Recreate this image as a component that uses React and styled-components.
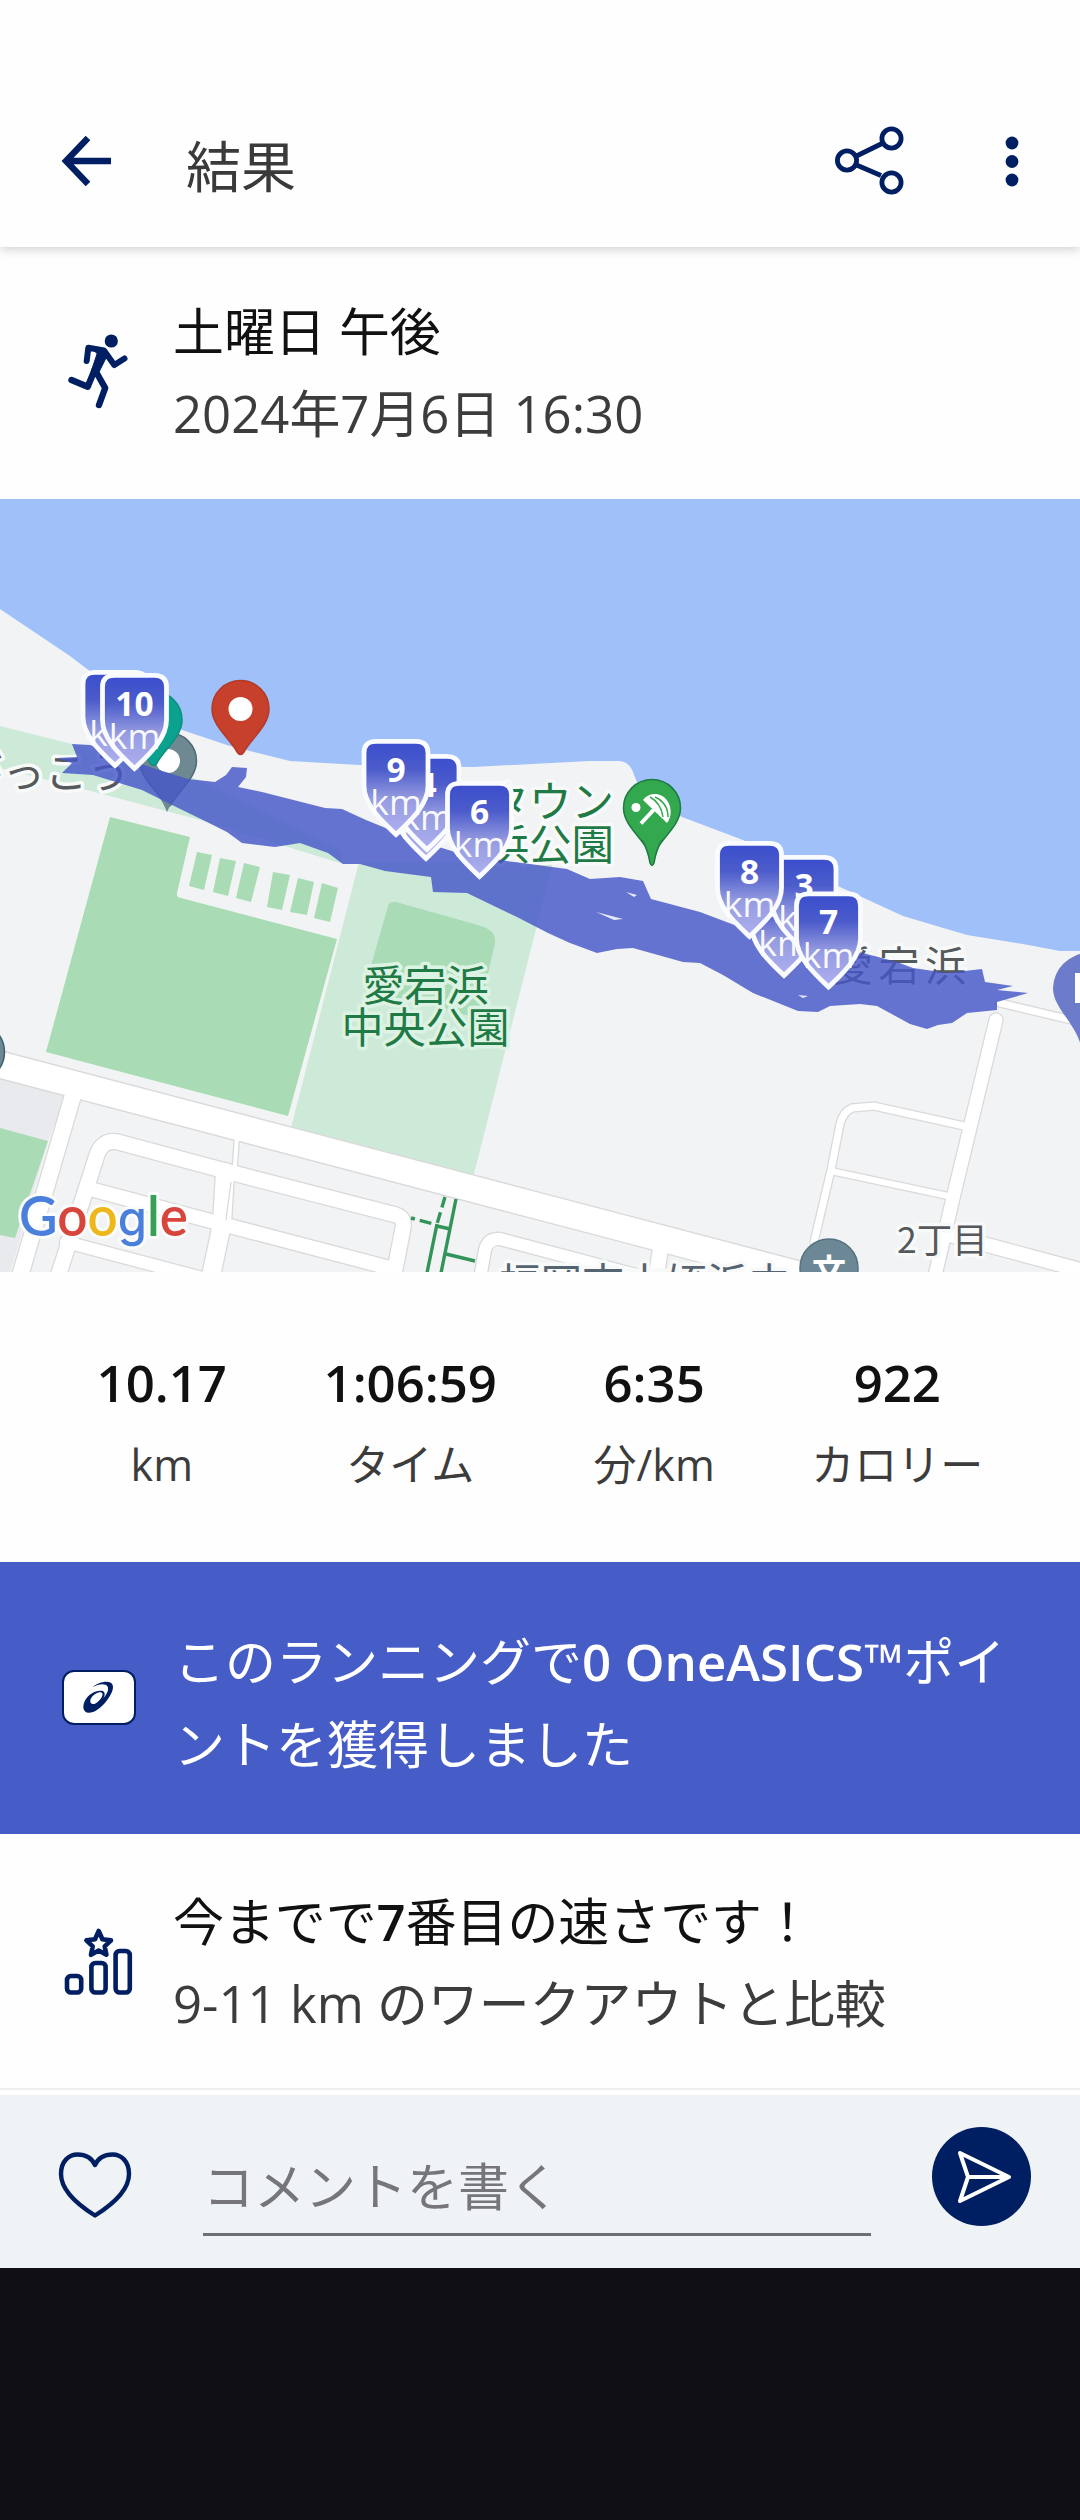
import React from 'react'
import styled, { createGlobalStyle } from 'styled-components';

const navy = '#001e62'

const stats = [
    { value: '10.17', label: 'km' },
    { value: '1:06:59', label: 'タイム' },
    { value: '6:35', label: '分/km' },
    { value: '922', label: 'カロリー' },
]

// later entries are drawn on top
const kmMarkers = [
    { km: 1, x: 115, y: 670 },
    { km: 10, x: 134.5, y: 673 },
    { km: 5, x: 426, y: 763 },
    { km: 4, x: 427, y: 754 },
    { km: 9, x: 396, y: 739 },
    { km: 6, x: 479.5, y: 781 },
    { km: 2, x: 784, y: 880 },
    { km: 3, x: 804, y: 855 },
    { km: 8, x: 749.5, y: 841 },
    { km: 7, x: 828.5, y: 891.5 },
]

const courts = [
    '197,852 212,855 204,890 189,886',
    '220,858 236,861 228,896 213,892',
    '244,863 260,867 251,902 236,898',
    '273,872 290,875 282,910 267,907',
    '298,878 314,882 307,915 290,912',
    '322,883 338,888 330,922 314,918',
]

const roads = [
    { d: 'M74 1092 L20 1276', w: 16 },
    { d: 'M55 1286 L96 1158 Q101 1139 118 1142 L237 1174 L396 1215 Q405 1218 403 1228 L391 1290', w: 15 },
    { d: 'M90 1189 L222 1224 L390 1268', w: 14 },
    { d: 'M66 1242 L210 1280', w: 12 },
    { d: 'M237 1136 L234 1178', w: 4 },
    { d: 'M225 1172 L222 1224 L208 1290', w: 18 },
    { d: 'M478 1290 L485 1250 Q488 1238 500 1239 L640 1276', w: 12 },
    { d: 'M661 1245 L655 1285', w: 15 },
    { d: 'M-10 1062 L540 1206.5 L850 1288', w: 26 },
    { d: 'M1000 1003 L1080 1022', w: 7 },
    { d: 'M964 1126 L874 1106 L852 1108 Q843 1112 840 1124 L831 1170 L814 1242', w: 7 },
    { d: 'M831 1171 L948 1196', w: 6 },
    { d: 'M950 1235 L1084 1271', w: 14 },
    { d: 'M996 1020 L953 1198 L934 1280', w: 13 },
]

function Pin({ x, y, fill, stroke, dot = true }) {
    return (
        <g transform={`translate(${x} ${y})`}>
            <path
                d="M0 -28.5 A28.5 28.5 0 0 1 28.5 0 C28.5 17 10 30 3.5 43 Q0 48 -3.5 43 C-10 30 -28.5 17 -28.5 0 A28.5 28.5 0 0 1 0 -28.5 Z"
                fill={fill}
                stroke={stroke}
                strokeWidth="1.5"
            />
            {dot && <circle r="12" fill="#fff" />}
        </g>
    )
}

function KmMarker({ km, x, y }) {
    return (
        <g transform={`translate(${x} ${y})`}>
            <path
                d="M-20 2.4 H20 Q32 2.4 32 14 V47 C32 66 14 82 0 95.5 C-14 82 -32 66 -32 47 V14 Q-32 2.4 -20 2.4 Z"
                fill="url(#shield)"
                stroke="#fafbff"
                strokeWidth="4.8"
            />
            <MarkerNumber x="0" y="42.5">{km}</MarkerNumber>
            <MarkerUnit x="0" y="76">km</MarkerUnit>
        </g>
    )
}

function RouteMap() {
    return (
        <MapSvg viewBox="0 499 1080 773">
            <defs>
                <linearGradient id="shield" x1="0" y1="0" x2="0" y2="1">
                    <stop offset="0" stopColor="#3a4dcc" />
                    <stop offset="0.3" stopColor="#4c5ccb" />
                    <stop offset="0.62" stopColor="#969ce0" />
                    <stop offset="1" stopColor="#adb0f0" />
                </linearGradient>
            </defs>
            <rect x="0" y="499" width="1080" height="774" fill="#9fc0f9" />
            <path
                d="M0 609 L70 656 L87 669 L140 704 L182 730 L230 746 L290 761 L360 765 L473 767 L590 761 L620 761 Q629 762 633 772 L640 790 L682 817 L743 840 L840 887 L903 916 L967 935 L1023 944 L1060 951 H1080 V1273 H0 Z"
                fill="#f2f3f4"
            />

            {/* parks */}
            <path d="M0 726 L72 744 L200 780 L340 850 L343 864 L200 820 L87 790 L0 768 Z" fill="#cdead9" />
            <path d="M359 862 H553 L473.5 1176 L291 1128 Z" fill="#cdead9" />
            <path d="M388 906 Q390 901 396 902 L478 925 Q497 930 495 943 L478 1018 L364 990 Z" fill="#a9dcb6" />
            <path d="M110 817 L190 837 L177 893 Q176 897 181 898 L337 939 L288 1116 L46 1052 Z" fill="#a9dcb4" />
            {courts.map((points) => <polygon key={points} points={points} fill="#a9dcb4" />)}
            <path d="M0 1070 L66 1096 L48 1141 L10 1273 H0 Z" fill="#e8eaed" />
            <path d="M0 1128 L48 1141 L15 1238 L0 1235 Z" fill="#a9dcb4" />

            {/* road casings first so that the junctions stay open */}
            <g fill="none" stroke="#dadadb" strokeLinecap="round">
                {roads.map((road) => <path key={road.d} d={road.d} strokeWidth={road.w + 2.6} />)}
            </g>
            <g fill="none" stroke="#fff" strokeLinecap="round">
                {roads.map((road) => <path key={road.d} d={road.d} strokeWidth={road.w} />)}
            </g>
            <path d="M231 1182 L226 1220" stroke="#dadadb" strokeWidth="1.3" />
            <g fill="none" stroke="#33945a" strokeWidth="3.4">
                <path d="M445 1197 L437 1224" strokeDasharray="11 5" />
                <path d="M437 1224 L427 1273 M456 1199 L441 1273 M437 1226 L450 1229 M446 1254 L475 1261" />
                <path d="M411 1218 L434 1224" strokeDasharray="4 5 12 5" />
            </g>

            <PlaceLabel x="-40" y="788" $size={42.5} $color="#55595c">がっこう</PlaceLabel>
            <PlaceLabel x="614" y="817" $size={42.5} $anchor="end">タウン</PlaceLabel>
            <PlaceLabel x="614" y="860" $size={42.5} $anchor="end">浜公園</PlaceLabel>
            <PlaceLabel x="425.5" y="1001" $size={42} $anchor="middle" $halo="#dcf3e3">愛宕浜</PlaceLabel>
            <PlaceLabel x="425.5" y="1043" $size={42} $anchor="middle" $halo="#dcf3e3">中央公園</PlaceLabel>
            <PlaceLabel x="832" y="981" $size={41} $color="#55595c" $spacing={5.5}>愛宕浜</PlaceLabel>
            <PlaceLabel x="897" y="1253" $size={35.5} $color="#55595c">2丁目</PlaceLabel>
            <PlaceLabel x="499" y="1299" $size={41.6} $color="#566370">福岡市立姪浜中</PlaceLabel>

            <circle cx="829" cy="1268" r="29" fill="#6c8795" stroke="#557280" strokeWidth="1.5" />
            <SchoolGlyph x="829" y="1284">文</SchoolGlyph>
            <circle cx="-25" cy="1052" r="29.5" fill="#6c8795" stroke="#3f5f6b" strokeWidth="1.5" />
            <Pin x={168} y={761} fill="#6f8993" stroke="#4f6a75" />
            <path d="M155 785 L167 812 L180 785 Z" fill="#6f8993" />

            {/* beach */}
            <Pin x={652} y={808} fill="#34a84f" stroke="#1b7b42" dot={false} />
            <path d="M642 840 Q648 850 650 863 Q652 868 654 863 Q656 850 662 840" fill="#34a84f" stroke="#1b7b42" strokeWidth="1.5" />
            <circle cx="636" cy="807.5" r="4.5" fill="#fff" />
            <path d="M641 823.5 L659 804" stroke="#fff" strokeWidth="4" />
            <path d="M643 800 C650 791 662 793 667.5 801 C672.5 809 671 818 667 823 Z" fill="#fff" />
            <path d="M650 797 Q661 803 663 817 M655 797 Q668 803 668 817" fill="none" stroke="#34a84f" strokeWidth="1.5" />

            {/* track */}
            <path
                d="M72 744 L90 745 L150 767 L188 779 L215 782 L226 775 L232 767 L247 768 L246 777 L238 787 L262 792 L325 808 L342 809 L366 820 L410 838 L455 852 L507 861 L530 864 L567 869 L590 879 L620 877 L643 881 L651 899 L700 912 L737 926 L800 940 L863 953 L897 962 L913 968 L947 973 L982 969 L985 982 L1013 986 L997 990 L1028 993 L997 1002 V1010 L967 1013 L952 1023 L938 1025 L927 1029 L910 1024 L877 1006 L860 1004 L830 1006 L818 1012 L798 1011 L753 993 L723 975 L700 963 L683 962 L633 948 L617 949 L597 953 L570 943 L548 933 L517 917 L467 893 L433 892 L431 877 L385 871 L360 864 H343 L328 853 L300 843 L275 847 L242 843 L227 832 L207 822 L172 805 L142 790 L93 775 L62 773 L72 763 L57 758 L77 757 Z"
                fill="#4557c8"
                fillOpacity="0.82"
            />
            <path d="M596 912 L623 919 L614 920 Z M626 892 L637 895 L634 897 Z M798 995 L808 996 L803 998 Z" fill="#e6eaf6" />
            <path d="M1088 953 A36 36 0 0 0 1053 988 C1053 1008 1075 1022 1081 1046 H1090 Z" fill="#6c7ccb" />
            <rect x="1075" y="973" width="5" height="30" fill="#fff" />

            <Pin x={153.5} y={720} fill="#0aa28f" stroke="#0b8f7f" />
            <Pin x={240.5} y={709} fill="#c6402b" stroke="#b23a28" />
            {kmMarkers.map((marker) => <KmMarker key={marker.km} {...marker} />)}

            <GoogleMark x="19" y="1236" textLength="169" lengthAdjust="spacingAndGlyphs">
                <tspan fill="#4a7fdc">G</tspan>
                <tspan fill="#d8453c">o</tspan>
                <tspan fill="#ecb81c">o</tspan>
                <RoundG>g</RoundG>
                <tspan fill="#38a055">l</tspan>
                <tspan fill="#d8453c">e</tspan>
            </GoogleMark>
        </MapSvg>
    )
}

function App() {
  return (
    <Screen>
        <GlobalStyle />
        <Header>
            <BackIcon viewBox="0 0 54 54" aria-label="back">
                <path d="M28 4 L6 27 L28 50 M6 27 H51" />
            </BackIcon>
            <Title>結果</Title>
            <ShareIcon viewBox="0 0 72 72" aria-label="share">
                <path d="M24.5 31 L50 18.5 M24.5 40 L49 50.5" />
                <circle cx="15" cy="35.5" r="9.6" />
                <circle cx="59.5" cy="13.5" r="9.6" />
                <circle cx="59.5" cy="57.5" r="9.6" />
            </ShareIcon>
            <MoreIcon viewBox="0 0 14 54" aria-label="more">
                <circle cx="7" cy="9" r="6.4" />
                <circle cx="7" cy="27.5" r="6.4" />
                <circle cx="7" cy="46" r="6.4" />
            </MoreIcon>
        </Header>

        <InfoRow $height={252} $top={44}>
            <RowIcon viewBox="0 0 80 80">
                <circle cx="51.3" cy="8" r="6.6" fill={navy} stroke="none" />
                <path d="M26.7 28 L28.3 14.8 L44 17.5 L54.3 32 L64.5 25.5" strokeWidth="6" />
                <path d="M34 17 L46 18 L46 25 L39 39 L31 39 L37 21 Z" fill={navy} strokeWidth="1" />
                <path d="M11.5 47 L27.7 53.8 L35 36 M35 37 L45.2 55 L39 72" strokeWidth="6.4" />
            </RowIcon>
            <RowText>
                <Heading>土曜日 午後</Heading>
                <Detail>2024年7月6日 16:30</Detail>
            </RowText>
        </InfoRow>

        <RouteMap />

        <Stats>
            {stats.map((stat) => (
                <Stat key={stat.label}>
                    <StatValue>{stat.value}</StatValue>
                    <StatLabel>{stat.label}</StatLabel>
                </Stat>
            ))}
        </Stats>

        <Banner>
            <Badge>
                <svg width="70" height="51" viewBox="2 2 70 51">
                    <path
                        fillRule="evenodd"
                        fill={navy}
                        d="M30.6 17.3 C35 13 44 10.5 48.5 12.6 C53.5 15.5 50.5 23.5 44.5 31 C39 38 32 43 26.5 42.8 C21 42.5 20 36.5 23 30.5 C26.5 24 34 20 39.5 20.8 C43.5 21.4 43.2 25 41.5 28 C47 22 47.5 16.5 43.5 14.8 C40 13.5 35 14.6 30.6 17.3 Z M39.8 22.8 C36.5 20.8 29.5 25.5 28.4 30 C27.5 34.5 31.5 35.2 35 32.5 C39 29.5 42 24.6 39.8 22.8 Z"
                    />
                </svg>
            </Badge>
            <BannerText>このランニングで<b>0 OneASICS™</b>ポイントを獲得しました</BannerText>
        </Banner>

        <InfoRow $height={256} $top={47} $divider>
            <RowIcon viewBox="0 0 80 80">
                <path d="M38.7 8 L42.4 16.3 L51 17.4 L44.7 23.4 L46.4 31.8 L38.7 27.6 L31 31.8 L32.7 23.4 L26.4 17.4 L35 16.3 Z" strokeWidth="4.6" />
                <rect x="7" y="53" width="14.2" height="16.5" rx="4" strokeWidth="4.6" />
                <rect x="31.4" y="40" width="14.2" height="29.5" rx="4" strokeWidth="4.6" />
                <rect x="55.6" y="28" width="14.2" height="41.5" rx="4" strokeWidth="4.6" />
            </RowIcon>
            <RowText>
                <Heading>今までで<b>7</b>番目の速さです！</Heading>
                <Detail>9-11 km のワークアウトと比較</Detail>
            </RowText>
        </InfoRow>

        <CommentBar>
            <HeartIcon viewBox="0 0 76 68" aria-label="like">
                <path d="M38 64.5 C26 57 4 42 4 23 C4 10 12 3.5 20.5 3.5 C28.5 3.5 35 7.5 38 14 C41 7.5 47.5 3.5 55.5 3.5 C64 3.5 72 10 72 23 C72 42 50 57 38 64.5 Z" />
            </HeartIcon>
            <CommentField>コメントを書く</CommentField>
            <SendButton aria-label="send">
                <svg width="60" height="60" viewBox="0 0 60 60" fill="none" stroke="#fff" strokeWidth="4" strokeLinejoin="round">
                    <path d="M6 6 L55 30 L6 54 L14 30 Z M14 30 H54" />
                </svg>
            </SendButton>
        </CommentBar>
    </Screen>
  )
}

const GlobalStyle = createGlobalStyle`
    body {
        margin: 0;
        background: #101014;
    }
`

const Screen = styled.div`
    width: 1080px;
    height: 2520px;
    background: #101014;
    color: #111;
    font-family: "Open Sans", "Noto Sans CJK JP", sans-serif;
    overflow: hidden;

    svg {
        display: block;
        flex-shrink: 0;
    }

    b {
        font-weight: 600;
    }
`

const Header = styled.header`
    display: flex;
    align-items: center;
    box-sizing: border-box;
    height: 247px;
    padding: 74px 61px 0 60px;
    background: #fefefe;
    position: relative;
    box-shadow: 0 2px 10px rgba(0, 0, 0, 0.2);
`

const BackIcon = styled.svg`
    width: 54px;
    height: 54px;
    fill: none;
    stroke: ${navy};
    stroke-width: 6.4;
`

const Title = styled.h1`
    flex: 1;
    margin: 0;
    padding: 10px 0 0 72px;
    font-size: 55px;
    line-height: 80px;
    font-weight: 400;
    color: #3a3a3a;
`

const ShareIcon = styled.svg`
    width: 72px;
    height: 72px;
    margin-right: 101px;
    fill: none;
    stroke: ${navy};
    stroke-width: 4.8;
`

const MoreIcon = styled.svg`
    width: 14px;
    height: 54px;
    fill: ${navy};
`

const InfoRow = styled.section`
    display: flex;
    align-items: flex-start;
    box-sizing: border-box;
    height: ${(props) => props.$height}px;
    padding: ${(props) => props.$top}px 40px 0 60px;
    border-bottom: ${(props) => props.$divider ? '2px solid #eeeeef' : 'none'};
    background: #fefefe;
`

const RowIcon = styled.svg`
    width: 80px;
    height: 80px;
    margin: 42px 33px 0 0;
    fill: none;
    stroke: ${navy};
    stroke-linecap: round;
    stroke-linejoin: round;
`

const RowText = styled.div`
    font-size: 50.9px;
    line-height: 82px;
    white-space: nowrap;
`

const Heading = styled.div`
    color: #111;
`

const Detail = styled.div`
    color: #3c3c3c;
`

const MapSvg = styled.svg`
    width: 1080px;
    height: 773px;
`

const PlaceLabel = styled.text`
    font-family: "Noto Sans CJK JP", sans-serif;
    font-size: ${(props) => props.$size}px;
    font-weight: 400;
    letter-spacing: ${(props) => props.$spacing || 0}px;
    text-anchor: ${(props) => props.$anchor || 'start'};
    fill: ${(props) => props.$color || '#1f7a45'};
    stroke: ${(props) => props.$halo || '#f8fafa'};
    stroke-width: 7px;
    stroke-linejoin: round;
    paint-order: stroke;
`

const SchoolGlyph = styled.text`
    font-family: "Noto Sans CJK JP", sans-serif;
    font-size: 34px;
    font-weight: 700;
    text-anchor: middle;
    fill: #fff;
`

const MarkerNumber = styled.text`
    font-size: 33.5px;
    font-weight: 700;
    text-anchor: middle;
    fill: #fff;
`

const MarkerUnit = styled.text`
    font-size: 35.5px;
    text-anchor: middle;
    fill: rgba(255, 255, 255, 0.95);
`

const GoogleMark = styled.text`
    font-family: Lato, sans-serif;
    font-size: 55px;
    font-weight: 600;
    stroke: #fbfcfc;
    stroke-width: 6px;
    stroke-linejoin: round;
    paint-order: stroke;
`

const RoundG = styled.tspan`
    font-family: Inter, sans-serif;
    font-size: 49px;
    font-weight: 500;
    fill: #4a7fdc;
`

const Stats = styled.section`
    display: flex;
    justify-content: space-evenly;
    box-sizing: border-box;
    height: 290px;
    padding-top: 70px;
    background: #fefefe;
`

const Stat = styled.div`
    text-align: center;
`

const StatValue = styled.div`
    font-size: 50.9px;
    line-height: 82px;
    font-weight: 600;
    color: #111;
`

const StatLabel = styled.div`
    font-size: 43px;
    line-height: 82px;
    color: #3c3c3c;
`

const Banner = styled.section`
    display: flex;
    align-items: flex-start;
    box-sizing: border-box;
    height: 272px;
    padding: 58px 60px 0 62px;
    background: #465cc7;
`

const Badge = styled.div`
    flex-shrink: 0;
    box-sizing: border-box;
    width: 74px;
    height: 55px;
    margin: 50px 38px 0 0;
    border: 2px solid ${navy};
    border-radius: 12px;
    background: #fff;
`

const BannerText = styled.p`
    margin: 0;
    font-size: 51px;
    line-height: 83px;
    color: #fff;
    word-break: break-all;
`

const CommentBar = styled.footer`
    display: flex;
    align-items: flex-start;
    box-sizing: border-box;
    height: 178px;
    padding: 32px 49px 0 57px;
    background: #eff3f6;
    border-top: 5px solid #fefefe;
`

const HeartIcon = styled.svg`
    width: 76px;
    height: 68px;
    margin-top: 24px;
    fill: none;
    stroke: ${navy};
    stroke-width: 4.4;
    stroke-linejoin: round;
`

const CommentField = styled.div`
    width: 668px;
    margin: 18px 61px 0 70px;
    padding-bottom: 6px;
    border-bottom: 3px solid #6d7176;
    font-size: 51px;
    line-height: 82px;
    color: #75757b;
`

const SendButton = styled.button`
    display: flex;
    align-items: center;
    justify-content: center;
    flex-shrink: 0;
    width: 99px;
    height: 99px;
    padding: 0 0 0 4px;
    border: none;
    border-radius: 50%;
    background: ${navy};
`

export default App
